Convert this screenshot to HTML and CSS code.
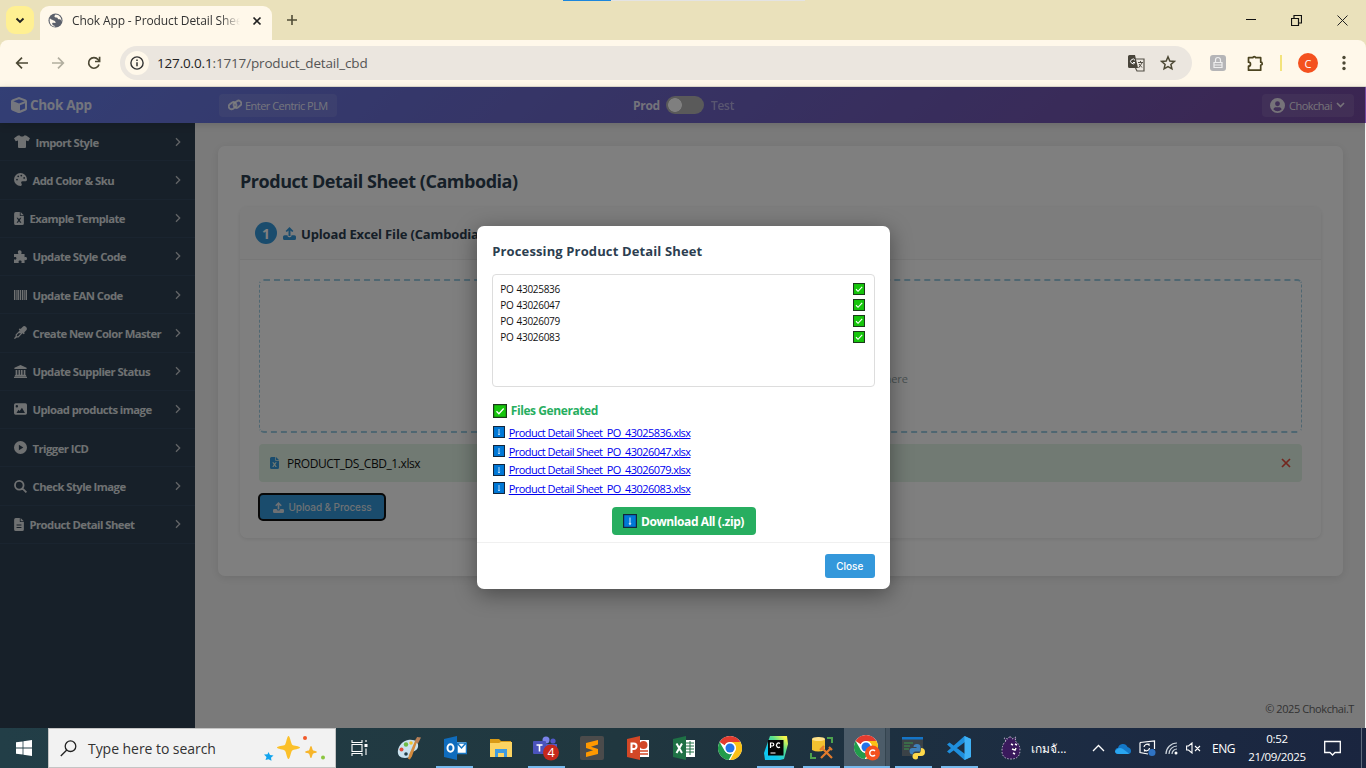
FILE: index.html
```html
<!DOCTYPE html>
<html lang="en">
<head>
<meta charset="utf-8">
<title>Chok App - Product Detail Sheet</title>
<link rel="stylesheet" href="styles.css">
</head>
<body>
<svg class="defs" width="0" height="0">
  <symbol id="chev" viewBox="0 0 8 12"><path d="M2 2.300 5.700 6 2 9.700" fill="none" stroke="currentColor" stroke-opacity=".85" stroke-width="1.300"/></symbol>
  <symbol id="xls" viewBox="0 0 12 16"><path fill="currentColor" fill-rule="evenodd" d="M2 0h5v5h5v9a2 2 0 0 1-2 2H2a2 2 0 0 1-2-2V2a2 2 0 0 1 2-2zm6 0 4 4H8zM3 7l2 3-2 3.200h1.700L6 11.300l1.300 1.900H9L7 10l2-3H7.300L6 8.800 4.700 7z"/></symbol>
  <symbol id="up" viewBox="0 0 16 16"><path fill="currentColor" d="M8 0l4.800 4.800-1.500 1.500L9.200 4.200V11H6.800V4.200L4.700 6.300 3.200 4.800zM0 12a2 2 0 0 1 2-2h3.500v.5a2 2 0 0 0 2 2h1a2 2 0 0 0 2-2V10H14a2 2 0 0 1 2 2v2a2 2 0 0 1-2 2H2a2 2 0 0 1-2-2z"/></symbol>
  <symbol id="ok" viewBox="0 0 14 14"><rect x=".6" y=".6" width="12.800" height="12.800" fill="#16c60c" stroke="#1b3a1b" stroke-width="1.200"/><path d="M3.500 7.300 5.900 9.700 10.700 4.500" fill="none" stroke="#fff" stroke-width="1.300"/></symbol>
  <symbol id="dn" viewBox="0 0 14 14"><rect x=".6" y=".6" width="12.800" height="12.800" fill="#0078d7" stroke="#12263d" stroke-width="1.200"/><path d="M7 3.500v6.500M6 9.200 7 10.500 8 9.200" fill="none" stroke="#c4e0fa" stroke-width="1.100"/></symbol>
  <symbol id="chrome" viewBox="0 0 24 24"><circle cx="12" cy="12" r="12" fill="#fff"/><path fill="#e33b2e" d="M12 0a12 12 0 0 1 10.400 6H12a6 6 0 0 0-5.300 3.200L1.600 6A12 12 0 0 1 12 0z"/><path fill="#fbc116" d="M22.400 6A12 12 0 0 1 12 24l5.200-9A6 6 0 0 0 12 6z"/><path fill="#229c4b" d="M1.600 6 6.800 15a6 6 0 0 0 7.500 2.500L10.700 24A12 12 0 0 1 1.600 6z"/><circle cx="12" cy="12" r="5.800" fill="#fff"/><circle cx="12" cy="12" r="4.500" fill="#2473e8"/></symbol>
</svg>

<div class="tabstrip">
  <div class="tabmenu"><svg width="10" height="7" viewBox="0 0 10 7"><path d="M1.500 1.500 5 5l3.500-3.500" fill="none" stroke="#222" stroke-width="1.900"/></svg></div>
  <div class="tab">
    <svg width="15" height="15" viewBox="0 0 16 16"><circle cx="8" cy="8" r="7.500" fill="#5b606b"/><path d="M2 5.500C4 8 7 7 8 9.500S4 9 4.500 11.500 7 13 8 14.500C3 14.500 1 10 2 5.500zM8 1.500c-2 2-1 3 1 3.200s1 2.300 3 2 2 1.500 2.300 2.800C15 5 12 1.500 8 1.500z" fill="#fff8ec"/></svg>
    <span class="tabtitle">Chok App - Product Detail Sheet</span>
    <svg width="10" height="10" viewBox="0 0 10 10"><path d="M1.500 1.500l7 7m0-7-7 7" stroke="#222" stroke-width="1.700"/></svg>
  </div>
  <svg class="plus" width="12" height="12" viewBox="0 0 12 12"><path d="M6 1v10M1 6h10" stroke="#504c36" stroke-width="1.600"/></svg>
  <div class="wins">
    <svg width="10" height="10"><path d="M0 4.500h10" stroke="#111"/></svg>
    <svg width="11" height="11"><path d="M.5 3.500h7v7h-7zM3 3V.500h7.500v7.500H8" fill="none" stroke="#111" stroke-width="1.200"/></svg>
    <svg width="11" height="11"><path d="M.5.500l10 10m0-10-10 10" stroke="#222"/></svg>
  </div>
</div>
<div class="toolbar">
  <svg class="nav" width="14" height="14" viewBox="0 0 14 14"><path d="M13 7H2M7 1.700 1.700 7 7 12.300" fill="none" stroke="#4c4834" stroke-width="1.700"/></svg>
  <svg class="nav" width="14" height="14" viewBox="0 0 14 14"><path d="M1 7h11M7 1.700 12.300 7 7 12.300" fill="none" stroke="#b2ae9f" stroke-width="1.700"/></svg>
  <svg class="nav" width="14" height="14" viewBox="0 0 14 14"><path d="M12 8.500A5.300 5.300 0 1 1 11 3.500L12.500 5M12.600.800v4.700H8" fill="none" stroke="#4c4834" stroke-width="1.700"/></svg>
  <div class="omni">
    <div class="info"><svg width="14" height="14" viewBox="0 0 14 14"><circle cx="7" cy="7" r="6.100" fill="none" stroke="#333" stroke-width="1.400"/><path d="M7 6.200v4M7 3.500V5" stroke="#333" stroke-width="1.500"/></svg></div>
    <span class="url"><b>127.0.0.1</b>:1717/product_detail_cbd</span>
    <svg class="trans" width="17" height="17" viewBox="0 0 17 17"><path d="M7.500 4H16v12H9L7.500 13" fill="none" stroke="#555148" stroke-width="1.200"/><path d="M1.500 0h5.500l3 13H1.500A1.500 1.500 0 0 1 0 11.500v-10A1.500 1.500 0 0 1 1.500 0z" fill="#48443a"/><path d="M7 5.300A2.300 2.300 0 1 0 7 7.500H5" fill="none" stroke="#fff"/><path d="M10 7.500h5M12.500 6v1.500M10.500 13 14 8M11 9l3 3.500" stroke="#555148"/></svg>
    <svg width="16" height="16" viewBox="0 0 16 16"><path d="M8 1.800 9.800 6l4.500.4-3.400 3 1 4.400L8 11.500l-3.900 2.300 1-4.400-3.400-3L6.200 6z" fill="none" stroke="#4c4834" stroke-width="1.500"/></svg>
  </div>
  <svg class="ext" width="16" height="16" viewBox="0 0 16 16"><rect width="16" height="16" rx="3" fill="#b5b5b7"/><path d="M5.500 7V5a2.500 2.500 0 0 1 5 0v2M4 7.500h8M4 10h8M4 12.500h8M4 7v6M12 7v6" fill="none" stroke="#eee" stroke-width="1.200"/></svg>
  <svg class="puz" width="17" height="17" viewBox="0 0 17 17"><path d="M1.500 2.700h4.300a1.500 1.500 0 0 1 2.900 0h5v4.500a1.500 1.500 0 0 1 0 3v5H1.500v-4a2 2 0 0 0 0-4z" fill="none" stroke="#4c4420" stroke-width="1.700" stroke-linejoin="round"/></svg>
  <i class="sep"></i>
  <div class="avatar">C</div>
  <svg class="dots" width="4" height="16" fill="#4c4834"><circle cx="2" cy="2.500" r="1.700"/><circle cx="2" cy="8" r="1.700"/><circle cx="2" cy="13.500" r="1.700"/></svg>
</div>

<div class="page">
  <header class="appbar">
    <svg width="16" height="16" viewBox="0 0 16 16" class="cube"><path fill="currentColor" fill-rule="evenodd" d="M7.300.200a2 2 0 0 1 1.400 0l6 2.200A2 2 0 0 1 16 4.200v7.400a2 2 0 0 1-1.100 1.800l-6 2.500a2 2 0 0 1-1.800 0l-6-2.500A2 2 0 0 1 0 11.600V4.200a2 2 0 0 1 1.300-1.800zM8 2.200 2.300 4.300 8 6.500l5.700-2.200zM9 13.600l5-2.200V6.200L9 8.200z"/></svg>
    <span class="brand">Chok App</span>
    <div class="plm"><svg width="14" height="12" viewBox="0 0 14 12" fill="none" stroke="currentColor" stroke-width="1.900"><rect x="0.500" y="4" width="8" height="5.500" rx="2.700" transform="rotate(-38 4.500 6.700)"/><rect x="5.500" y="2.500" width="8" height="5.500" rx="2.700" transform="rotate(-38 9.500 5.200)"/></svg><span>Enter Centric PLM</span></div>
    <b class="prod">Prod</b><i class="toggle"></i><b class="test">Test</b>
    <div class="user"><svg width="15" height="15" viewBox="0 0 16 16"><path fill="currentColor" fill-rule="evenodd" d="M8 0a8 8 0 1 1 0 16A8 8 0 0 1 8 0zm0 3.500a2.600 2.600 0 1 0 0 5.200 2.600 2.600 0 0 0 0-5.200zM3.500 12a6 6 0 0 0 9 0c-.5-1.500-1.500-2.200-3-2.200h-3c-1.500 0-2.500.700-3 2.200z"/></svg><span>Chokchai</span><svg width="9" height="6" viewBox="0 0 9 6"><path d="M1 1l3.500 3.500L8 1" fill="none" stroke="currentColor" stroke-width="1.600"/></svg></div>
  </header>
  <div class="body">
    <nav class="side">
      <a><svg width="16" height="13" viewBox="0 0 16 13"><path fill="currentColor" d="M5.300.300C6.500 2 9.500 2 10.700.300L12.500.700 16 3.300 14.300 6.300 12 5.600V12q0 1-1 1H5q-1 0-1-1V5.600L1.700 6.300 0 3.300 3.500.700z"/></svg><span>Import Style</span><svg class="c" width="8" height="12"><use href="#chev"/></svg></a>
      <a><svg width="13" height="13" viewBox="0 0 16 16"><path fill="currentColor" fill-rule="evenodd" d="M8 0a8 8 0 0 1 8 8c0 2-1.500 2.200-2.500 2.200h-3c-2 0-2 2-1.300 2.800.8 1.300.5 3-1.200 3A8 8 0 1 1 8 0zM3.700 7a1.100 1.100 0 1 0 0 2.200 1.100 1.100 0 0 0 0-2.200zm1.500-4a1.100 1.100 0 1 0 0 2.200 1.100 1.100 0 0 0 0-2.200zM9 2a1.100 1.100 0 1 0 0 2.200A1.100 1.100 0 0 0 9 2zm3.500 3a1.100 1.100 0 1 0 0 2.200 1.100 1.100 0 0 0 0-2.200z"/></svg><span>Add Color &amp; Sku</span><svg class="c" width="8" height="12"><use href="#chev"/></svg></a>
      <a><svg width="10" height="13"><use href="#xls"/></svg><span>Example Template</span><svg class="c" width="8" height="12"><use href="#chev"/></svg></a>
      <a><svg width="13" height="13" viewBox="0 0 16 16"><path fill="currentColor" d="M0 5h5.500C4 2 5 .200 7 .200S10 2 8.800 5H13v4c1.500-1 3-.5 3 1.500s-1.500 2.500-3 1.500v4H9c1-2 0-3-1.500-3S5 14 6 16H0v-4.500c2 1 3 0 3-1.300S2 8 0 9z"/></svg><span>Update Style Code</span><svg class="c" width="8" height="12"><use href="#chev"/></svg></a>
      <a><svg width="13" height="12" viewBox="0 0 14 12"><path fill="currentColor" d="M0 .500h1.500v11H0zM2.200.500h.7v11h-.7zM3.700.500h1.600v11H3.700zM6.200.500h1.500v11H6.200zM8.600.500h1.500v11H8.600zM10.800.500h.8v11h-.8zM12.400.500H14v11h-1.600z"/></svg><span>Update EAN Code</span><svg class="c" width="8" height="12"><use href="#chev"/></svg></a>
      <a><svg width="13" height="13" viewBox="0 0 16 16"><path fill="currentColor" fill-rule="evenodd" d="M10.500 1.200a3 3 0 0 1 4.300 4.300L12.500 8l.8.800-1.500 1.500-6-6 1.500-1.500.8.800zM7 5.500 10.500 9 5.500 14H3.500L1 16l-1-1 2-2.500v-2zM3.500 11v1.500H5L8.500 9H5.500z"/></svg><span>Create New Color Master</span><svg class="c" width="8" height="12"><use href="#chev"/></svg></a>
      <a><svg width="13" height="13" viewBox="0 0 16 16"><path fill="currentColor" d="M8 0l7.500 3.500V5H.5V3.500zM2 6h2v6h1.500V6h2v6h1V6h2v6H12V6h2v6l1 1v1H1v-1l1-1zM0 14.500h16V16H0z"/></svg><span>Update Supplier Status</span><svg class="c" width="8" height="12"><use href="#chev"/></svg></a>
      <a><svg width="13" height="12" viewBox="0 0 16 14"><path fill="currentColor" fill-rule="evenodd" d="M2 0h12a2 2 0 0 1 2 2v10a2 2 0 0 1-2 2H2a2 2 0 0 1-2-2V2a2 2 0 0 1 2-2zm1.500 2a1.500 1.500 0 1 0 0 3 1.500 1.500 0 0 0 0-3zM3 12h10.500L9.800 5.500 7 9.500 5.500 8z"/></svg><span>Upload products image</span><svg class="c" width="8" height="12"><use href="#chev"/></svg></a>
      <a><svg width="13" height="13" viewBox="0 0 16 16"><path fill="currentColor" fill-rule="evenodd" d="M8 0a8 8 0 1 1 0 16A8 8 0 0 1 8 0zM6 4.500v7L11.500 8z"/></svg><span>Trigger ICD</span><svg class="c" width="8" height="12"><use href="#chev"/></svg></a>
      <a><svg width="13" height="13" viewBox="0 0 16 16"><path fill="none" stroke="currentColor" stroke-width="2.200" d="M6.500 1.200a5.300 5.300 0 1 1 0 10.600 5.300 5.300 0 0 1 0-10.600zM10.300 10.300l5 5"/></svg><span>Check Style Image</span><svg class="c" width="8" height="12"><use href="#chev"/></svg></a>
      <a><svg width="10" height="13" viewBox="0 0 12 16"><path fill="currentColor" fill-rule="evenodd" d="M2 0h5v5h5v9a2 2 0 0 1-2 2H2a2 2 0 0 1-2-2V2a2 2 0 0 1 2-2zm6 0 4 4H8zM3 8v1.200h6V8zm0 3v1.200h6V11z"/></svg><span>Product Detail Sheet</span><svg class="c" width="8" height="12"><use href="#chev"/></svg></a>
    </nav>
    <main class="main">
      <section class="card">
        <h1>Product Detail Sheet (Cambodia)</h1>
        <div class="step">
          <div class="stephead"><span class="num">1</span><svg width="13" height="13"><use href="#up"/></svg><span>Upload Excel File (Cambodia)</span></div>
          <div class="stepbody">
            <div class="drop"><span>Drop your Excel file here</span></div>
            <div class="file"><svg width="9" height="12"><use href="#xls"/></svg><span>PRODUCT_DS_CBD_1.xlsx</span><svg class="rm" width="10" height="10"><path d="M1 1l8 8m0-8-8 8" stroke="#e74c3c" stroke-width="1.700"/></svg></div>
            <div class="upbtn"><svg width="11" height="11"><use href="#up"/></svg><span>Upload &amp; Process</span></div>
          </div>
        </div>
      </section>
      <footer>© 2025 Chokchai.T</footer>
    </main>
  </div>
  <div class="overlay">
    <div class="modal">
      <div class="content">
        <h2>Processing Product Detail Sheet</h2>
        <div class="log">
          <p><span>PO 43025836</span><svg width="12" height="12"><use href="#ok"/></svg></p>
          <p><span>PO 43026047</span><svg width="12" height="12"><use href="#ok"/></svg></p>
          <p><span>PO 43026079</span><svg width="12" height="12"><use href="#ok"/></svg></p>
          <p><span>PO 43026083</span><svg width="12" height="12"><use href="#ok"/></svg></p>
        </div>
        <h3><svg width="14" height="14"><use href="#ok"/></svg>Files Generated</h3>
        <div class="links">
          <a><svg width="12" height="12"><use href="#dn"/></svg><span>Product Detail Sheet_PO_43025836.xlsx</span></a>
          <a><svg width="12" height="12"><use href="#dn"/></svg><span>Product Detail Sheet_PO_43026047.xlsx</span></a>
          <a><svg width="12" height="12"><use href="#dn"/></svg><span>Product Detail Sheet_PO_43026079.xlsx</span></a>
          <a><svg width="12" height="12"><use href="#dn"/></svg><span>Product Detail Sheet_PO_43026083.xlsx</span></a>
        </div>
        <div class="zip"><svg width="14" height="14"><use href="#dn"/></svg><span>Download All (.zip)</span></div>
      </div>
      <div class="foot"><span class="close">Close</span></div>
    </div>
  </div>
</div>

<div class="taskbar">
  <div class="start"><svg width="16" height="16" viewBox="0 0 16 16"><path fill="#fff" d="M0 2.300 6.600 1.400v6.200H0zM7.400 1.300 16 0v7.600H7.400zM0 8.400h6.600v6.200L0 13.700zM7.400 8.400H16V16l-8.600-1.300z"/></svg></div>
  <div class="search">
    <svg width="17" height="17" viewBox="0 0 17 17"><circle cx="10.500" cy="6.200" r="5.300" fill="none" stroke="#222" stroke-width="1.300"/><path d="M6.800 10 .800 16" stroke="#222" stroke-width="1.300"/></svg>
    <span>Type here to search</span>
    <svg class="spark" width="62" height="26" viewBox="0 0 62 26"><path fill="#fbc02a" d="M24.500 1c1.500 0 2.500 7.500 3.700 8.700S36 11 36 12.500s-6.800 1.800-8 3.200-2 8.300-3.500 8.300-2.300-7-3.500-8.300-8-1.700-8-3.200 6.800-1.500 8-2.800S23 1 24.500 1z"/><path fill="#f7b52a" d="M47 11c1 0 1.200 3.500 2 4.200s4 .8 4 1.800-3.200 1-4 1.700-1 4.300-2 4.300-1.200-3.600-2-4.300-4-.7-4-1.700 3.200-1.100 4-1.800S46 11 47 11z"/><path fill="#12a4ee" d="M4.500 17l1.500 3 3.500.500-2.500 2.300.5 3-3-1.500-3 .7 1-3L0 19.500l3.500-.2z"/><circle cx="41" cy="3" r="2" fill="#f1592a"/><circle cx="59" cy="22.500" r="2" fill="#8bc53f"/></svg>
  </div>
  <div class="tv"><svg width="17" height="16" viewBox="0 0 17 16" fill="none" stroke="#fff" stroke-width="1.100"><path d="M1 0v2.500h10V0M1 16v-2.500h10V16M1 4.500h10v7H1zM15 0v2M15 8.500V15"/><path d="M13.500 5.500h3" stroke-width="3"/></svg></div>
  <div class="apps">
    <div class="app"><svg width="24" height="24" viewBox="0 0 24 24"><path fill="#c9e2ee" d="M11 4c7-1 11 2 10 7s-7 4-7 6 0 5-6 5c-5 0-8-3-7-8S6 5 11 4z"/><circle cx="9" cy="18" r="1.800" fill="#223e47"/><circle cx="4.500" cy="13.500" r="2" fill="#e04b3a"/><circle cx="9" cy="8.500" r="2.200" fill="#6dbb45"/><circle cx="14" cy="7" r="1.800" fill="#f2c230"/><path d="M20 3 14 20l-2 3 1-4z" stroke="#d38a3d" stroke-width="2"/><path d="M18 6l2-5 4 .500-3 6z" fill="#b88058"/></svg></div>
    <div class="app on"><svg width="24" height="24" viewBox="0 0 24 24"><path fill="#fff" d="M13 6h10v12H13z"/><path d="M14 7l4.500 5L23 7M14 18V7h9.500v10.500H14" fill="none" stroke="#1977c4" stroke-width="1.500"/><path fill="#0f6cbd" d="M1 3l13-3v24L1 21z"/><ellipse cx="7.500" cy="12" rx="3" ry="3.800" fill="none" stroke="#fff" stroke-width="2"/></svg></div>
    <div class="app"><svg width="24" height="24" viewBox="0 0 24 24"><path fill="#d99b16" d="M1 3h9l2 2h10v5H1z"/><path fill="#fcd462" d="M1 7h9l2-1h11v15H1z"/><path fill="#3f9be0" d="M6 13h12v8h-3v-4h-6v4H6z"/></svg></div>
    <div class="app on"><svg width="26" height="26" viewBox="0 0 26 26"><circle cx="13" cy="5" r="3.500" fill="#7b83eb"/><circle cx="20" cy="6" r="2.600" fill="#5059c9"/><path fill="#5059c9" d="M10 9h14v8a5 5 0 0 1-9 3z"/><rect y="6" width="13" height="13" rx="1" fill="#4b53bc"/><path d="M3.500 10h6M6.500 10v6.500" stroke="#fff" stroke-width="1.600"/><circle cx="18" cy="17.500" r="8" fill="#c5281c"/><text x="14.500" y="22.300" fill="#fff" font-family="Open Sans" font-size="12.500">4</text></svg></div>
    <div class="app"><svg width="24" height="24" viewBox="0 0 24 24"><rect width="24" height="24" rx="2" fill="#4b4b4b"/><path fill="#ff9800" d="M18 4v4.500l-7 2.200 7 2.300v5L6 21v-4.500l7-2.200-7-2.300V7z"/></svg></div>
    <div class="app"><svg width="24" height="24" viewBox="0 0 24 24"><path fill="#fff" d="M12 4h11v17H12z"/><circle cx="17.500" cy="9" r="4" fill="#d24726"/><path d="M14 15h8M14 18h8" stroke="#d24726" stroke-width="1.500"/><path fill="#d24726" d="M1 3l13-3v24L1 21z"/><path d="M5.500 17V7.500h2.300a2.500 2.500 0 0 1 0 5.500H5.500" fill="none" stroke="#fff" stroke-width="2"/></svg></div>
    <div class="app"><svg width="24" height="24" viewBox="0 0 24 24"><path fill="#fff" d="M12 4h11v17H12z"/><path d="M14 7h8M14 10h8M14 13h8M14 16h8M18 5v14" stroke="#1e7145"/><path fill="#1e7145" d="M1 3l13-3v24L1 21z"/><path d="M4.500 7.500l5.500 9.500m0-9.500L4.500 17" stroke="#fff" stroke-width="2"/></svg></div>
    <div class="app"><svg width="24" height="24"><use href="#chrome"/></svg></div>
    <div class="app on"><svg width="24" height="24" viewBox="0 0 24 24"><defs><linearGradient id="pc" x1="0" y1="1" x2="1" y2="0"><stop offset=".3" stop-color="#10c8f0"/><stop offset=".65" stop-color="#5be08a"/><stop offset=".9" stop-color="#f8f84a"/></linearGradient></defs><path fill="url(#pc)" d="M6 0h17l1 8-4 15-4 1H1l-1-7z"/><rect x="4" y="4" width="15.500" height="15.500" fill="#050505"/><path d="M6.500 12V7h1.800a1.500 1.500 0 0 1 0 3H6.500M16 7.500a2.200 2.200 0 1 0 0 3.500M6.500 17h5" fill="none" stroke="#fff" stroke-width="1.200"/></svg></div>
    <div class="app on"><svg width="24" height="24" viewBox="0 0 24 24"><path fill="#f2c130" d="M2 3q6-3 13 0v11q-7 3-13 0z"/><ellipse cx="8.500" cy="3" rx="6.500" ry="2" fill="#ffe28a"/><path d="M17 2h5v5M1 17v5h5" fill="none" stroke="#4ea34e" stroke-width="2"/><path d="M12 12l10 10M21 12 11 22M10 14l4-4M19 11l3 3" stroke="#e27b2c" stroke-width="2.200"/></svg></div>
    <div class="app on active"><svg width="26" height="26" viewBox="0 0 26 26"><use href="#chrome" width="24" height="24"/><circle cx="18.500" cy="18" r="7.500" fill="#f4511e"/><path d="M21 16a3 3 0 1 0 0 4" fill="none" stroke="#fff" stroke-width="1.400"/></svg></div>
    <div class="app on"><svg width="24" height="24" viewBox="0 0 24 24"><path fill="#3b4247" d="M1 1h21v19H1z"/><path fill="#1475c8" d="M1 1h21v2.500H1z"/><path d="M3 7h9M3 10h6M3 13h5" stroke="#3c7b4b" stroke-width="1.300"/><path fill="#3f7fb8" d="M12.500 11q0-3 3.500-3t3.500 3v4.500h-5q-2.500 0-2.500 3-3.500 0-3.500-3.500 0-3 3-3h4v-1z"/><path fill="#ffd94a" d="M20 12q4 0 4 4t-4 4h-3v1.500q0 2-2 2-3.500 0-3.500-3 0-3.500 3.500-3.500h3q2 0 2-5z"/></svg></div>
    <div class="app on"><svg width="24" height="24" viewBox="0 0 24 24"><path fill="#1f8fdd" d="M17.500 0 24 3v18l-6.500 3L0 8.500 2.500 6.500 18 18V6L2.500 17.500 0 15.500z"/><path fill="#3fb1f5" d="M17.500 0 24 3v18l-6.500 3z"/></svg></div>
  </div>
  <div class="pl"><svg width="20" height="24" viewBox="0 0 20 24"><path fill="#3a1a5c" stroke="#e8e0f0" stroke-width=".8" stroke-dasharray="1.500 1.500" d="M5 5 3 2l4 1 2-3 2 3 4-2-1 4q5 3 5 9 0 9-9 9T1 15q0-7 4-10z"/><path d="M10 8l2 1m2-1 2 1M11 13l3 1 1-2M12 17l2 1" stroke="#fff" stroke-width="1.500"/></svg></div>
  <span class="thai">เกมจั...</span>
  <svg class="t1" width="13" height="8"><path d="M1 7l5.500-5.500L12 7" fill="none" stroke="#fff" stroke-width="1.300"/></svg>
  <svg class="t2" width="16" height="11" viewBox="0 0 16 11"><path fill="#1478c8" d="M3 5a5 5 0 0 1 9.500-1Q16 5 16 8t-3 3H3.500a3 3 0 0 1-.5-6z"/><path fill="#2aa5f0" d="M2 6q3-2 6 0l6 4.500-1 .5H3.500Q0 11 0 8z"/></svg>
  <svg class="t3" width="17" height="16" viewBox="0 0 17 16"><path d="M1 2.500 15.500 1v8M1 2.500v10L9 14M5 7a3 3 0 0 1 5-2v-1.500M10.500 8a3 3 0 0 1-5 2v1.500" fill="none" stroke="#fff" stroke-width="1.200"/><circle cx="13" cy="12.500" r="3.500" fill="#2f73c4"/></svg>
  <svg class="t4" width="13" height="13" viewBox="0 0 13 13"><path d="M1 12A11 11 0 0 1 12 1M4 12a8 8 0 0 1 8-8M7 12a5 5 0 0 1 5-5" fill="none" stroke="#ccd4dc" stroke-width="1.200"/><circle cx="11" cy="11" r="1.500" fill="#fff"/></svg>
  <svg class="t5" width="15" height="12" viewBox="0 0 15 12"><path d="M.6 4v4H2.500L6 11V1L2.500 4zM9 4l5 5m0-5-5 5" fill="none" stroke="#fff" stroke-width="1.100"/></svg>
  <span class="eng">ENG</span>
  <div class="clock"><span>0:52</span><span>21/09/2025</span></div>
  <svg class="note" width="17" height="17" viewBox="0 0 17 17"><path d="M.7 1.500h15.600v11H11L8.500 15 6 12.500H.7z" fill="none" stroke="#fff" stroke-width="1.300"/></svg>
  <i class="peek"></i>
</div>
</body>
</html>
```
FILE: styles.css
```css
* { box-sizing: border-box; }
body { margin: 0; width: 1366px; height: 768px; overflow: hidden; display: flex; flex-direction: column; font-family: "Open Sans", "Noto Sans", sans-serif; font-size: 11px; white-space: nowrap; }
svg { flex: none; display: block; }
.defs { position: absolute; }
h1, h2, h3, p { margin: 0; }

.tabstrip { height: 40px; background: linear-gradient(90deg, #1c86dc 0 48px, #e3e3e3 48px) 563px 0 / 242px 1px no-repeat, #eae1bb; display: flex; align-items: flex-start; padding: 6px 0 0 6px; }
.tabmenu { width: 28px; height: 28px; border-radius: 9px; background: #fff092; display: flex; align-items: center; justify-content: center; }
.tab { margin-left: 6px; width: 232px; height: 34px; background: #fff8ea; border-radius: 9px 9px 0 0; display: flex; align-items: center; padding: 0 10px 5px 8px; color: #333; }
.tabtitle { font-size: 12px; letter-spacing: -.12px; margin: 0 12px 0 9px; width: 168px; overflow: hidden; -webkit-mask-image: linear-gradient(90deg, #000 88%, transparent); mask-image: linear-gradient(90deg, #000 88%, transparent); }
.plus { margin: 8px 0 0 14px; }
.wins { margin: 9px 18px 0 auto; display: flex; gap: 35px; }
.toolbar { height: 47px; background: #fff8ea; border-bottom: 1px solid #e0dccf; display: flex; align-items: center; padding-left: 15px; border-radius: 8px 8px 0 0; box-shadow: 0 -8px 0 -0px #eae1bb; clip-path: inset(0); }
.nav { margin-right: 22px; }
.omni { width: 1072px; margin-left: -3px; height: 34px; border-radius: 17px; background: #ebe6df; display: flex; align-items: center; padding: 0 16px 0 5px; }
.info { width: 24px; height: 24px; border-radius: 50%; background: #fff8ea; display: flex; align-items: center; justify-content: center; }
.url { font-size: 13.500px; letter-spacing: -.16px; color: #555; margin-left: 8px; }
.url b { font-weight: 400; color: #222; }
.trans { margin: 0 15px 0 auto; }
.ext { margin-left: 18px; }
.puz { margin-left: 21px; }
.sep { width: 2px; height: 16px; background: #f3e37c; margin: 0 16px 0 16px; }
.avatar { width: 20px; height: 20px; border-radius: 50%; background: #f4511e; color: #fff; display: flex; align-items: center; justify-content: center; font-size: 11px; }
.dots { margin-left: 24px; }

.page { height: 641px; position: relative; display: flex; flex-direction: column; background: #f5f5f5; }
.appbar { height: 36px; flex: none; background: linear-gradient(135deg, #667eea, #764ba2); color: rgba(255,255,255,.85); display: flex; align-items: center; padding: 0 11px; box-shadow: 0 2px 8px rgba(0,0,0,.15); z-index: 1; }
.brand { width: 190px; font-weight: 700; font-size: 13.500px; letter-spacing: -.3px; margin-left: 3px; margin-right: -1px; }
.plm { width: 118px; height: 23px; background: rgba(255,255,255,.1); border-radius: 4px; display: flex; align-items: center; gap: 3px; padding-left: 9px; font-size: 11px; letter-spacing: -.53px; }
.prod { font-size: 12px; margin-left: 296px; letter-spacing: -.3px; width: 33px; }
.toggle { width: 38px; height: 18px; border-radius: 9px; background: radial-gradient(circle at 9px 9px, #fff 6.500px, transparent 7.200px), #b4b4b4; }
.test { font-size: 12px; margin-left: 7px; opacity: .55; letter-spacing: -.3px; font-weight: 600; }
.user { margin-left: auto; width: 92px; height: 23px; background: rgba(255,255,255,.1); border-radius: 4px; display: flex; align-items: center; gap: 4px; padding-left: 8px; letter-spacing: -.5px; margin-right: 1px; }
.body { flex: 1; display: flex; }
.side { width: 195px; background: #2f4052; color: #dfe2e4; }
.side a { height: 38.270px; display: flex; align-items: center; padding: 0 13px 0 14px; border-bottom: 1px solid #34495e; font-weight: 700; font-size: 11.300px; letter-spacing: -.55px; }
.side a span { margin-left: 5.500px; padding-top: 1px; }
.side .c { margin-left: auto; }
.main { flex: 1; padding: 23px 23px 0 23px; display: flex; flex-direction: column; }
.card { height: 430px; background: #fff; border-radius: 7px; padding: 22px; box-shadow: 0 2px 10px rgba(0,0,0,.1); }
h1 { font-size: 18px; line-height: 27px; height: 28px; color: #2c3e50; letter-spacing: -.46px; }
.step { margin-top: 11px; height: 331px; border-radius: 7px; overflow: hidden; box-shadow: 0 1px 4px rgba(0,0,0,.1); }
.stephead { height: 53px; background: #fafafa; border-bottom: 1px solid #eee; display: flex; align-items: center; padding-left: 15px; color: #3498db; }
.stephead span:last-child { color: #2c3e50; font-weight: 700; font-size: 13px; letter-spacing: -.15px; margin-left: 5px; padding-top: 1px; }
.num { width: 22px; height: 22px; border-radius: 50%; background: #3498db; color: #fff; font-weight: 700; font-size: 14px; display: flex; align-items: center; justify-content: center; margin-right: 6px; }
.stepbody { padding: 19px; }
.drop { height: 154px; border: 1.500px dashed #9fcfe4; border-width: 2px 1px; border-radius: 5px; padding: 90px 393px 0 0; text-align: right; color: #95a5a6; font-size: 11px; }
.file { margin-top: 11px; height: 38px; background: #e3f5e6; border-radius: 4px; display: flex; align-items: center; padding: 0 11px; color: #3498db; }
.file span { color: #111; font-size: 12px; letter-spacing: -.42px; margin-left: 8px; }
.rm { margin-left: auto; }
.upbtn { margin: 11px 0 0 -1px; width: 128px; height: 28px; border: 2px solid #101010; border-radius: 5px; background: #3498db; color: #dce2e8; display: flex; align-items: center; justify-content: center; gap: 5px; font: 500 10px Inter, sans-serif; letter-spacing: -.1px; }
footer { margin-top: auto; text-align: right; margin-right: -11px; height: 27px; font-size: 11px; letter-spacing: -.42px; color: #666; }
.overlay { position: absolute; inset: 0 1px 0 0; background: rgba(0,0,0,.5); z-index: 2; display: flex; justify-content: center; padding: 138.500px 0 0 2px; }
.modal { width: 412.500px; height: 363.500px; background: #fff; border-radius: 7px; box-shadow: 0 5px 22px rgba(0,0,0,.4); }
.content { height: 317.500px; padding: 15px; border-bottom: 1px solid #f0f0f0; }
h2 { font-size: 13px; line-height: 21px; letter-spacing: .13px; color: #2c3e50; }
.log { margin-top: 12.500px; height: 113px; border: 1px solid #ddd; border-radius: 4px; padding: 6.500px 9px 0 7px; color: #111; }
.log p { height: 15.800px; display: flex; align-items: center; justify-content: space-between; font-size: 10px; letter-spacing: -.3px; word-spacing: .8px; }
h3 { margin-top: 14.500px; display: flex; align-items: center; gap: 4px; line-height: 18px; font-size: 12px; letter-spacing: -.42px; color: #27ae60; padding-left: .5px; }
.links { margin-top: 3.500px; }
.links a { display: flex; align-items: center; height: 18.700px; color: #00e; }
.links svg { margin: 0 0 0 .5px; }
.links span { font-size: 11px; letter-spacing: -.56px; text-decoration: underline; padding-left: 4px; }
.zip { margin: 9px auto 0; width: 144px; height: 28px; background: #27ae60; border-radius: 4px; color: #fff; display: flex; align-items: center; justify-content: center; gap: 4px; font-weight: 700; font-size: 12px; letter-spacing: -.42px; padding-top: 1px; }
.foot { padding: 11px 15px; display: flex; justify-content: flex-end; }
.close { width: 50px; height: 23.500px; background: #3498db; border-radius: 3px; color: #fff; display: flex; align-items: center; justify-content: center; font: 500 10px Inter, sans-serif; }

.taskbar { height: 40px; background: linear-gradient(90deg, #223e47, #20373f 45%, #1d3040 65%, #1c2b43 80%, #1a253f); color: #fff; display: flex; align-items: center; }
.start { width: 48px; padding-left: 16px; }
.search { width: 288px; height: 40px; background: #f2f2f2; border: 1px solid #c4c4c4; display: flex; align-items: center; padding: 0 9px 0 11px; color: #333; font-size: 14px; letter-spacing: -.05px; }
.search span { margin-left: 11px; }
.spark { margin-left: auto; }
.tv { width: 50px; padding-left: 15px; }
.apps { display: flex; height: 40px; width: 596px; }
.app { flex: 1; display: flex; align-items: center; justify-content: center; height: 40px; }
.app.on { background: linear-gradient(#76b9ed, #76b9ed) 50% 100% / 37px 2px no-repeat; }
.app.active { background: linear-gradient(#76b9ed, #76b9ed) 50% 100% / 100% 2px no-repeat, linear-gradient(90deg, #4c5c69 41px, #34444f 41px 42px, #43525f 42px); }
.pl { margin-left: 19px; }
.thai { width: 37px; margin-left: 10px; font-size: 12px; }
.t1 { margin-left: 24px; }
.t2 { margin-left: 10px; }
.t3 { margin-left: 8px; }
.t4 { margin-left: 9px; }
.t5 { margin-left: 8px; }
.eng { margin-left: 11px; width: 24px; font-size: 12px; letter-spacing: -.5px; }
.clock { width: 60px; margin-left: 11px; display: flex; flex-direction: column; align-items: center; font-size: 11.500px; line-height: 18px; letter-spacing: -.35px; }
.note { margin-left: 17px; }
.peek { margin-left: auto; margin-right: 4px; width: 1px; height: 40px; background: #5f6b7c; }
```
